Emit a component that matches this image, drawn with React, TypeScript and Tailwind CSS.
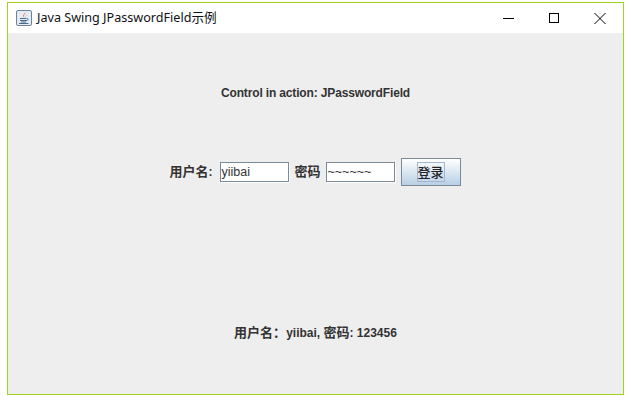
export default function App() {
  const bold = "font-['Liberation_Sans','Noto_Sans_CJK_SC',sans-serif] font-bold text-[12px] leading-[14px] text-[#333333]";
  const cjk = "text-[13px] font-['Noto_Sans_CJK_SC',sans-serif] font-bold";
  const field = "w-[69px] h-[20px] bg-white border border-[#7a8a99] shadow-[1px_1px_0_#ffffff] flex items-center pl-px text-[12.5px] text-[#333333] font-['Liberation_Sans',sans-serif]";
  return (
    <div className="w-[631px] h-[400px] bg-white pl-[7px] pt-[2px]">
      <div className="w-[617px] h-[393px] border border-[#a0d21e] flex flex-col bg-[#eeeeee]">
        <div className="h-[30px] bg-white flex items-center shrink-0">
          <svg width="16" height="16" viewBox="0 0 16 16" className="ml-[8px]">
            <rect x="0.5" y="0.5" width="15" height="15" rx="1.5" fill="#e4ebf2" stroke="#6d8299" />
            <path d="M8.8 1.8c2 2-2.400 3 -.5 5.400-3.300-2 1.900-3.200 .5-5.400z" fill="#d9481c" />
            <path d="M11 4.200c.6 1.200-2 1.600-.9 3-1.800-1.200 .9-1.800 .9-3z" fill="#e8792e" />
            <path d="M4 8.500h6.500M11 8.500c1.500 0 1.500 2-1 2.200M4 10.500h6M5 12h5M3 13.500h9.500" stroke="#47698c" strokeWidth="1" fill="none" />
          </svg>
          <span className="ml-[5px] text-[12.6px] text-[#111111] font-['Noto_Sans','Noto_Sans_CJK_SC',sans-serif]">
            Java Swing JPasswordField示例
          </span>
          <div className="ml-auto flex h-full items-center">
            <svg width="46" height="30" viewBox="0 0 46 30">
              <path d="M18 15.5h11" stroke="#000" strokeWidth="1" />
            </svg>
            <svg width="46" height="30" viewBox="0 0 46 30">
              <rect x="18.5" y="10.5" width="9" height="9" fill="none" stroke="#000" strokeWidth="1" />
            </svg>
            <svg width="46" height="30" viewBox="0 0 46 30">
              <path d="M17.5 10l11 11M28.5 10l-11 11" stroke="#000" strokeWidth="1" fill="none" />
            </svg>
          </div>
        </div>
        <div className="flex-1 flex flex-col items-center">
          <div className={`${bold} mt-[53px] tracking-[-0.15px]`}>Control in action: JPasswordField</div>
          <div className="mt-[58px] flex items-center h-[28px] mr-[1px]">
            <span className={`${bold} -translate-y-px`}><span className={cjk}>用户名</span>:</span>
            <div className={`${field} ml-[7px]`}>yiibai</div>
            <span className={`${bold} ml-[6px] -translate-y-px`}><span className={cjk}>密码</span></span>
            <div className={`${field} ml-[5px]`}>~~~~~~</div>
            <div className="ml-[6px] w-[60px] h-[28px] border border-[#7a8a99] bg-gradient-to-b from-white to-[#b8cfe5] flex items-center justify-center">
              <span className="border border-[#a3b8cc] w-[28px] h-[20px] flex items-center justify-center text-[13px] font-medium text-[#222222] font-['Noto_Sans_CJK_SC',sans-serif]">登录</span>
            </div>
          </div>
          <div className={`${bold} mt-[139px]`}><span className={cjk}>用户名：</span>yiibai, <span className={cjk}>密码</span>: 123456</div>
        </div>
      </div>
    </div>
  );
}
